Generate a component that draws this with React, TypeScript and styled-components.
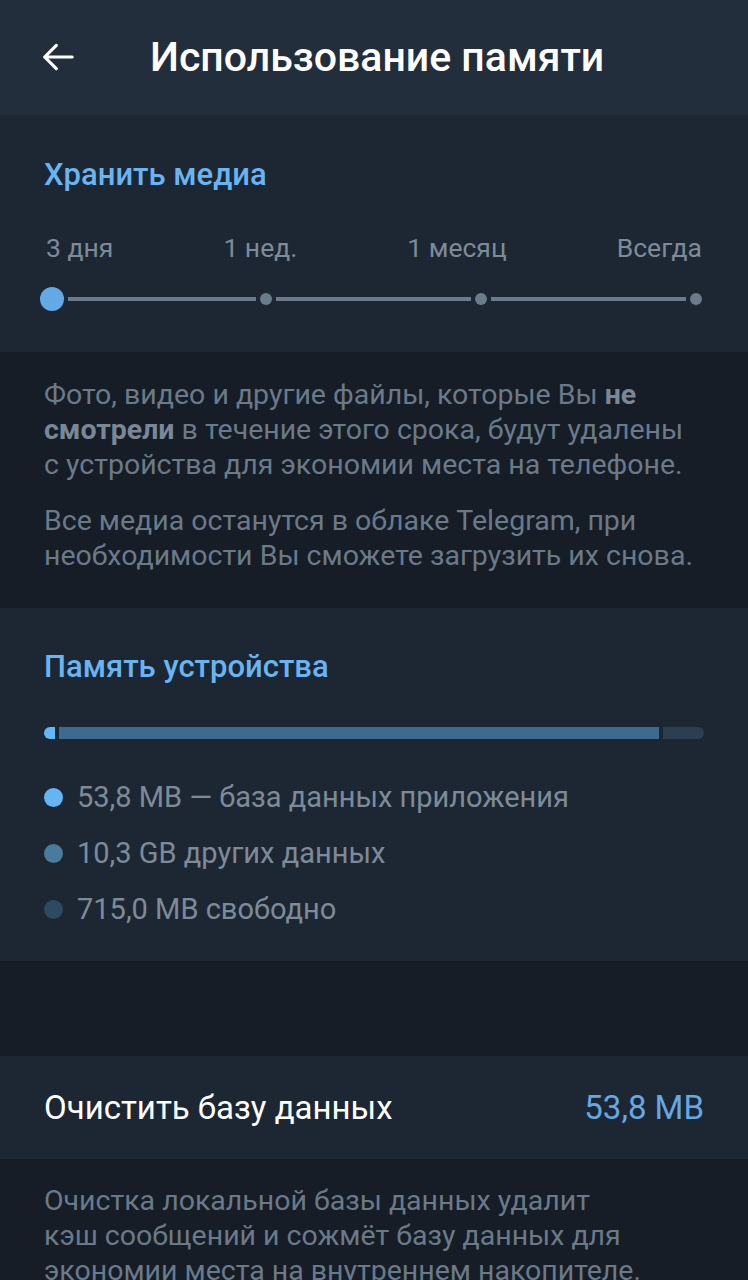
import styled, { createGlobalStyle } from 'styled-components';

const GlobalStyle = createGlobalStyle`
  body {
    margin: 0;
    background: #161d27;
    font-family: Roboto, "Noto Sans", sans-serif;
    -webkit-font-smoothing: antialiased;
  }
`;

const periods = ['3 дня', '1 нед.', '1 месяц', 'Всегда'];

const legend = [
  { color: '#64b5f6', text: '53,8 MB — база данных приложения' },
  { color: '#4a7a9c', text: '10,3 GB других данных' },
  { color: '#2e4a62', text: '715,0 MB свободно' },
];

const BackArrow = () => (
  <svg width="40" height="40" viewBox="0 0 24 24" fill="none">
    <path
      d="M20.5 12H4M11 5l-7 7 7 7"
      stroke="#fff"
      strokeWidth="1.9"
      strokeLinecap="round"
      strokeLinejoin="round"
    />
  </svg>
);

// stops measured from the left edge of the slider box
const PeriodSlider = () => {
  const stops = [12, 226, 441, 656];
  return (
    <svg width="668" height="30" viewBox="0 0 668 30">
      {stops.slice(0, 3).map((x, i) => (
        <rect
          key={x}
          x={x + (i === 0 ? 16 : 10)}
          y="13"
          width={stops[i + 1] - x - (i === 0 ? 26 : 20)}
          height="4"
          fill="#6b7b89"
        />
      ))}
      <circle cx={stops[0]} cy="15" r="12" fill="#64a9e4" />
      {stops.slice(1).map((x) => (
        <circle key={x} cx={x} cy="15" r="6" fill="#6b7b89" />
      ))}
    </svg>
  );
};

const App = () => {
  return (
    <Page>
      <GlobalStyle />
      <Header>
        <IconButton aria-label="back">
          <BackArrow />
        </IconButton>
        <Title>Использование памяти</Title>
      </Header>

      <Section $pad="42px 44px 34px">
        <SectionTitle>Хранить медиа</SectionTitle>
        <Periods>
          {periods.map((p) => (
            <span key={p}>{p}</span>
          ))}
        </Periods>
        <SliderWrap>
          <PeriodSlider />
        </SliderWrap>
      </Section>

      <Info $pad="25px 44px 35px">
        <p>
          Фото, видео и другие файлы, которые Вы <b>не</b>
          <br />
          <b>смотрели</b> в течение этого срока, будут удалены
          <br />с устройства для экономии места на телефоне.
        </p>
        <p>
          Все медиа останутся в облаке Telegram, при
          <br />
          необходимости Вы сможете загрузить их снова.
        </p>
      </Info>

      <Section $pad="41px 44px 34px">
        <SectionTitle>Память устройства</SectionTitle>
        <UsageBar>
          <Segment $color="#64b5f6" $width="11px" $round="left" />
          <Segment $color="#3d6a8e" $grow />
          <Segment $color="#2b3e52" $width="41px" $round="right" />
        </UsageBar>
        <Legend>
          {legend.map((item) => (
            <LegendRow key={item.text}>
              <Dot $color={item.color} />
              {item.text}
            </LegendRow>
          ))}
        </Legend>
      </Section>

      <Spacer />

      <Row>
        <RowLabel>Очистить базу данных</RowLabel>
        <RowValue>53,8 MB</RowValue>
      </Row>

      <Info $pad="24px 44px 30px">
        <p>
          Очистка локальной базы данных удалит
          <br />
          кэш сообщений и сожмёт базу данных для
          <br />
          экономии места на внутреннем накопителе.
        </p>
      </Info>
    </Page>
  );
};

export default App;

const Page = styled.div`
  width: 748px;
  min-height: 1280px;
  background: #161d27;
  overflow: hidden;
`;

const Header = styled.header`
  height: 115px;
  background: #232e3c;
  display: flex;
  align-items: center;
  padding: 0 0 2px 37px;
  box-sizing: border-box;
`;

const IconButton = styled.button`
  background: none;
  border: 0;
  padding: 0;
  width: 42px;
  height: 42px;
  display: flex;
  align-items: center;
  justify-content: center;
  margin-right: 71px;
  cursor: pointer;
`;

const Title = styled.h1`
  margin: 0;
  font-size: 41px;
  font-weight: 500;
  color: #ffffff;
`;

const Section = styled.section<{ $pad?: string }>`
  background: #1d2733;
  padding: ${({ $pad }) => $pad || '44px'};
`;

const SectionTitle = styled.h2`
  margin: 0;
  font-size: 31px;
  font-weight: 500;
  color: #69b4f2;
  line-height: 36px;
`;

const Periods = styled.div`
  display: flex;
  justify-content: space-between;
  margin-top: 39px;
  padding: 0 2px;
  font-size: 26.5px;
  color: #7d8b99;
  line-height: 32px;
`;

const SliderWrap = styled.div`
  margin-top: 20px;
  margin-left: -4px;
`;

const Info = styled.div<{ $pad: string }>`
  background: #161d27;
  padding: ${({ $pad }) => $pad};
  color: #6b7a89;
  font-size: 28.5px;
  line-height: 35px;
  white-space: nowrap;
  p {
    margin: 0 0 21px;
  }
  p:last-child {
    margin-bottom: 0;
  }
  b {
    font-weight: 700;
    color: #7a8896;
  }
`;

const UsageBar = styled.div`
  display: flex;
  gap: 4px;
  height: 12px;
  margin-top: 42px;
`;

const Segment = styled.div<{
  $color: string;
  $width?: string;
  $grow?: boolean;
  $round?: 'left' | 'right';
}>`
  background: ${({ $color }) => $color};
  width: ${({ $width }) => $width || 'auto'};
  flex: ${({ $grow }) => ($grow ? '1' : 'none')};
  border-radius: ${({ $round }) =>
    $round === 'left' ? '6px 0 0 6px' : $round === 'right' ? '0 6px 6px 0' : '0'};
`;

const Legend = styled.div`
  display: flex;
  flex-direction: column;
  gap: 20px;
  margin-top: 40px;
`;

const LegendRow = styled.div`
  display: flex;
  align-items: center;
  gap: 14px;
  font-size: 29px;
  line-height: 36px;
  color: #7d8b99;
`;

const Dot = styled.span<{ $color: string }>`
  width: 19px;
  height: 19px;
  border-radius: 50%;
  background: ${({ $color }) => $color};
  flex: none;
`;

const Spacer = styled.div`
  height: 95px;
  background: #161d27;
`;

const Row = styled.div`
  height: 103px;
  background: #1d2733;
  display: flex;
  align-items: center;
  justify-content: space-between;
  padding: 0 44px;
  font-size: 33px;
`;

const RowLabel = styled.span`
  color: #ffffff;
`;

const RowValue = styled.span`
  color: #64a9e4;
`;
